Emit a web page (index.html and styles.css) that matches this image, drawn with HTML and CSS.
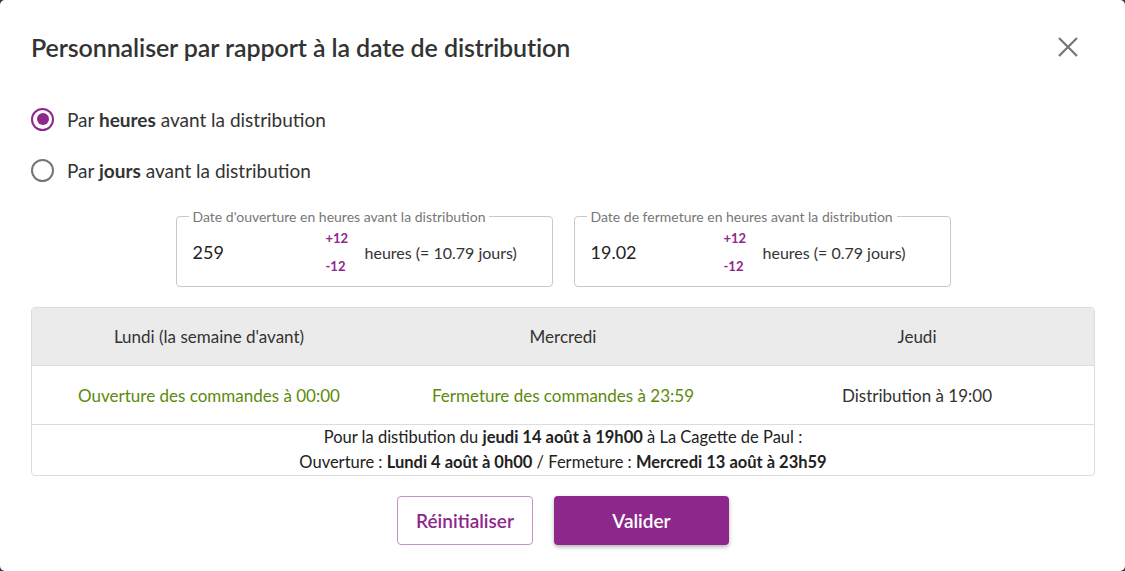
FILE: index.html
```html
<!DOCTYPE html>
<html lang="fr">
<head>
<meta charset="utf-8">
<title>Personnaliser</title>
<link rel="stylesheet" href="styles.css">
</head>
<body>
<div class="dialog">
  <div class="header">
    <h2 class="title">Personnaliser par rapport à la date de distribution</h2>
    <button class="close" aria-label="Fermer">
      <svg width="22" height="22" viewBox="0 0 22 22"><path d="M2 2 L20 20 M20 2 L2 20" stroke="#757575" stroke-width="2.2" fill="none"/></svg>
    </button>
  </div>

  <div class="radios">
    <label class="radio checked"><span class="dot"></span><span>Par <b>heures</b> avant la distribution</span></label>
    <label class="radio"><span class="dot"></span><span>Par <b>jours</b> avant la distribution</span></label>
  </div>

  <div class="fields">
    <fieldset class="field">
      <legend>Date d'ouverture en heures avant la distribution</legend>
      <div class="field-row">
        <span class="value">259</span>
        <span class="stepper"><span>+12</span><span>-12</span></span>
        <span class="unit">heures (= 10.79 jours)</span>
      </div>
    </fieldset>
    <fieldset class="field">
      <legend>Date de fermeture en heures avant la distribution</legend>
      <div class="field-row">
        <span class="value">19.02</span>
        <span class="stepper"><span>+12</span><span>-12</span></span>
        <span class="unit">heures (= 0.79 jours)</span>
      </div>
    </fieldset>
  </div>

  <div class="table">
    <div class="row head">
      <div class="cell">Lundi (la semaine d'avant)</div>
      <div class="cell">Mercredi</div>
      <div class="cell">Jeudi</div>
    </div>
    <div class="row body">
      <div class="cell green">Ouverture des commandes à 00:00</div>
      <div class="cell green">Fermeture des commandes à 23:59</div>
      <div class="cell">Distribution à 19:00</div>
    </div>
    <div class="summary">
      <div>Pour la distibution du <b>jeudi 14 août à 19h00</b> à La Cagette de Paul :</div>
      <div>Ouverture : <b>Lundi 4 août à 0h00</b> / Fermeture : <b>Mercredi 13 août à 23h59</b></div>
    </div>
  </div>

  <div class="actions">
    <button class="btn outline">Réinitialiser</button>
    <button class="btn primary">Valider</button>
  </div>
</div>
</body>
</html>
```

FILE: styles.css
```css
* { box-sizing: border-box; }
html, body { margin: 0; padding: 0; }
body {
  background: #3d3340;
  font-family: Lato, "Noto Sans", sans-serif;
  color: #333;
  width: 1125px;
  height: 571px;
  overflow: hidden;
}
.dialog {
  width: 1125px;
  height: 571px;
  background: #fff;
  border-radius: 5px;
  padding: 0 30px 0 31px;
}
.header {
  display: flex;
  justify-content: space-between;
  align-items: center;
  padding-top: 24px;
  height: 70px;
}
.title {
  margin: 0;
  font-size: 25px;
  font-weight: 600;
  color: #333;
  letter-spacing: -0.1px;
}
.close {
  border: 0;
  background: none;
  padding: 0;
  margin-right: 16px;
  width: 22px;
  height: 22px;
  display: flex;
}
.radios {
  display: flex;
  flex-direction: column;
  gap: 27px;
  margin-top: 37px;
}
.radio {
  display: flex;
  align-items: center;
  gap: 13px;
  font-size: 19px;
  color: #333;
  height: 24px;
}
.radio b { font-weight: 700; }
.dot {
  width: 23px;
  height: 23px;
  border-radius: 50%;
  border: 2px solid #757575;
  display: inline-block;
  position: relative;
}
.radio.checked .dot { border-color: #8e278c; }
.radio.checked .dot::after {
  content: "";
  position: absolute;
  left: 3.5px; top: 3.5px;
  width: 12px; height: 12px;
  border-radius: 50%;
  background: #8e278c;
}
.fields {
  display: flex;
  justify-content: center;
  gap: 21px;
  margin-top: 27px;
}
.field {
  width: 377px;
  height: 78px;
  margin: 0;
  border: 1px solid #c8c8c8;
  border-radius: 4px;
  padding: 0 16px;
}
.field legend {
  font-size: 14px;
  color: #777;
  padding: 0 4px;
  margin-left: -4px;
  line-height: 15px;
}
.field-row {
  display: flex;
  align-items: center;
  height: 60px;
  margin-top: -2px;
}
.value {
  width: 133px;
  font-size: 18px;
  color: #222;
}
.stepper {
  display: flex;
  flex-direction: column;
  gap: 12px;
  font-size: 13px;
  font-weight: 700;
  color: #8e278c;
  width: 39px;
  line-height: 16px;
}
.unit { font-size: 16px; color: #333; }
.table {
  margin-top: 20px;
  border: 1px solid #dcdcdc;
  border-radius: 4px;
  overflow: hidden;
}
.row {
  display: grid;
  grid-template-columns: 1fr 1fr 1fr;
  align-items: center;
}
.row.head { background: #ebebeb; height: 58px; border-bottom: 1px solid #dcdcdc; }
.row.body { height: 59px; border-bottom: 1px solid #dcdcdc; }
.cell { text-align: center; font-size: 17px; color: #333; }
.cell.green { color: #5c8a0c; }
.summary {
  height: 50px;
  display: flex;
  flex-direction: column;
  justify-content: center;
  align-items: center;
  font-size: 16.5px;
  line-height: 25px;
  color: #222;
}
.summary b { font-weight: 700; }
.actions {
  display: flex;
  justify-content: center;
  gap: 21px;
  margin-top: 20px;
}
.btn {
  height: 49px;
  border-radius: 4px;
  font-family: inherit;
  font-size: 19px;
  font-weight: 600;
}
.btn.outline {
  width: 136px;
  background: #fff;
  border: 1px solid #c98fc7;
  color: #8e278c;
}
.btn.primary {
  width: 175px;
  background: #8e278c;
  border: 0;
  color: #fff;
  box-shadow: 0 2px 4px rgba(0,0,0,0.3);
}
```
